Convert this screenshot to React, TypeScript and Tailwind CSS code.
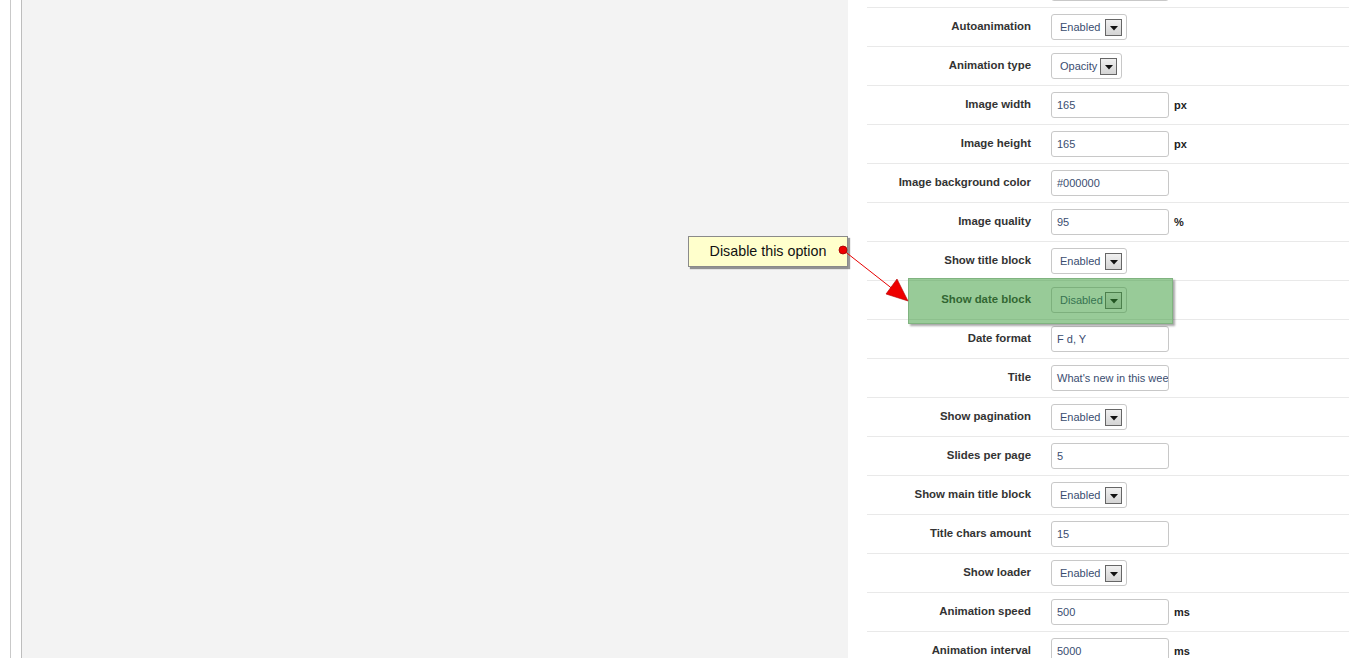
import React from 'react'

type Row = {
  label: string
  kind: 'input' | 'select' | 'none'
  value?: string
  unit?: string
  selectW?: string
}

const rows: Row[] = [
  { label: '', kind: 'input', value: '' },
  { label: 'Autoanimation', kind: 'select', value: 'Enabled', selectW: 'w-[76px]' },
  { label: 'Animation type', kind: 'select', value: 'Opacity', selectW: 'w-[71px]' },
  { label: 'Image width', kind: 'input', value: '165', unit: 'px' },
  { label: 'Image height', kind: 'input', value: '165', unit: 'px' },
  { label: 'Image background color', kind: 'input', value: '#000000' },
  { label: 'Image quality', kind: 'input', value: '95', unit: '%' },
  { label: 'Show title block', kind: 'select', value: 'Enabled', selectW: 'w-[76px]' },
  { label: 'Show date block', kind: 'select', value: 'Disabled', selectW: 'w-[76px]' },
  { label: 'Date format', kind: 'input', value: 'F d, Y' },
  { label: 'Title', kind: 'input', value: "What's new in this week" },
  { label: 'Show pagination', kind: 'select', value: 'Enabled', selectW: 'w-[76px]' },
  { label: 'Slides per page', kind: 'input', value: '5' },
  { label: 'Show main title block', kind: 'select', value: 'Enabled', selectW: 'w-[76px]' },
  { label: 'Title chars amount', kind: 'input', value: '15' },
  { label: 'Show loader', kind: 'select', value: 'Enabled', selectW: 'w-[76px]' },
  { label: 'Animation speed', kind: 'input', value: '500', unit: 'ms' },
  { label: 'Animation interval', kind: 'input', value: '5000', unit: 'ms' },
]

function DropButton() {
  return (
    <span className="ml-auto flex h-[17px] w-[17px] items-center justify-center border border-[#666] bg-gradient-to-b from-[#f0f0f0] to-[#d4d4d4]">
      <svg width="8" height="5" viewBox="0 0 8 5" className="mt-[3px]">
        <path d="M0 0 L8 0 L4 4.5 Z" fill="#111" />
      </svg>
    </span>
  )
}

function Control({ row }: { row: Row }) {
  if (row.kind === 'select') {
    return (
      <div
        className={`flex h-[26px] ${row.selectW} items-center rounded-[3px] border border-[#c8c8c8] bg-white pl-[8px] pr-[4px] text-[11px] text-[#3a4d70]`}
      >
        <span className="mt-px">{row.value}</span>
        <DropButton />
      </div>
    )
  }
  return (
    <div className="flex items-center">
      <div className="flex h-[26px] w-[118px] items-center overflow-hidden whitespace-nowrap rounded-[3px] border border-[#c8c8c8] bg-white pl-[5px] text-[11px] text-[#3a4d70]">
        {row.value}
      </div>
      {row.unit && <span className="ml-[5px] text-[11px] font-bold text-[#222]">{row.unit}</span>}
    </div>
  )
}

export default function App() {
  return (
    <div className="relative flex h-[658px] w-[1349px] overflow-hidden bg-white font-['Liberation_Sans',Arial,sans-serif]">
      {/* left gutter */}
      <div className="flex w-[848px] shrink-0">
        <div className="w-[10px] bg-white" />
        <div className="w-px bg-[#c9c9c9]" />
        <div className="w-[10px] bg-white" />
        <div className="w-px bg-[#bdbdbd]" />
        <div className="flex-1 bg-[#f3f3f3]" />
      </div>

      {/* settings form */}
      <div className="flex-1 bg-white pl-[19px]">
        <div className="-mt-[31px]">
          {rows.map((row, i) => (
            <div key={i} className="flex h-[39px] items-center border-b border-[#e9e9e9]">
              <div className="-mt-px w-[164px] text-right text-[11.4px] font-bold text-[#333]">{row.label}</div>
              <div className="ml-[20px]">
                <Control row={row} />
              </div>
            </div>
          ))}
        </div>
      </div>

      {/* highlight over "Show date block" */}
      <div className="absolute left-[908px] top-[278px] h-[46px] w-[265px] border border-[#80b380] bg-[rgba(49,151,49,0.5)] shadow-[2px_2px_2px_rgba(0,0,0,0.35)]" />

      {/* callout */}
      <div className="absolute left-[688px] top-[236px] flex h-[31px] w-[160px] items-center justify-center border border-[#8a8a8a] bg-[#ffffcc] text-[14.3px] text-[#111] shadow-[2px_2px_1px_rgba(0,0,0,0.4)]">
        Disable this option
      </div>

      <svg className="pointer-events-none absolute left-0 top-0" width="1349" height="658">
        <line x1="843" y1="250" x2="894" y2="290" stroke="#e60000" strokeWidth="1" />
        <polygon points="908,301 886,294 897,279" fill="#ee0000" stroke="#b00000" strokeWidth="0.6" />
        <circle cx="843" cy="250" r="4" fill="#ee0000" stroke="#a00000" strokeWidth="0.8" />
      </svg>
    </div>
  )
}
